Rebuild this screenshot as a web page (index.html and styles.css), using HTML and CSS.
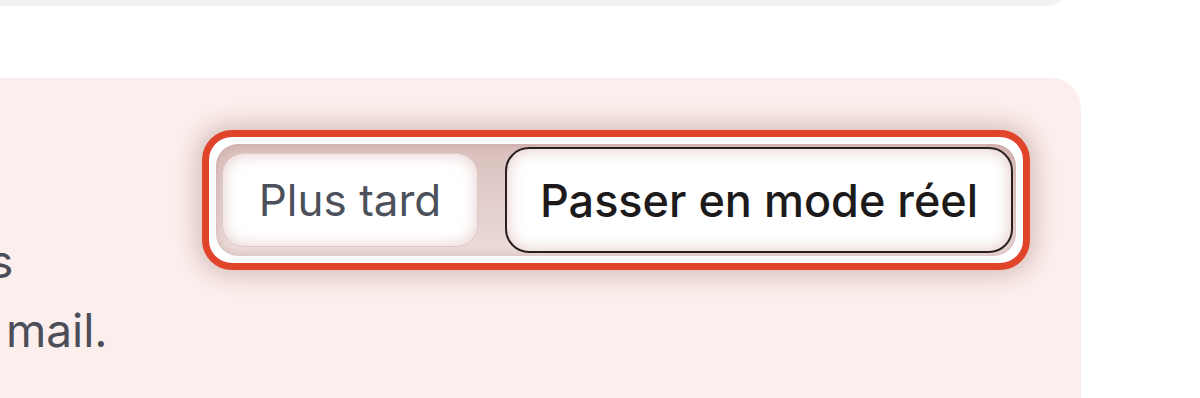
FILE: index.html
```html
<!DOCTYPE html>
<html lang="fr">
<head>
    <meta charset="UTF-8">
    <meta name="viewport" content="width=device-width, initial-scale=1.0">
    <title>Mode test</title>
    <link rel="stylesheet" href="styles.css">
</head>
<body>

<div class="top-card"></div>

<div class="test-banner">
    <div class="banner-text">
        <h2>Mode test</h2>
        <p class="line">Vous êtes actuellement en mode test. Les</p>
        <p class="line">ne sont pas encaissés et rien ne part par mail.</p>
    </div>
    <div class="highlight">
        <div class="actions">
            <button class="btn btn-later">Plus tard</button>
            <button class="btn btn-live">Passer en mode réel</button>
        </div>
    </div>
</div>

</body>
</html>
```

FILE: styles.css
```css
body {
    margin: 0;
    background-color: #fff;
    font-family: Inter, "Noto Sans", sans-serif;
    overflow: hidden;
}
.top-card {
    width: 1065px;
    height: 20px;
    margin-top: -14px;
    background-color: #f3f2f0;
    border-radius: 0 0 16px 0;
}
.test-banner {
    display: flex;
    align-items: flex-start;
    width: 2481px;
    margin-left: -1400px;
    margin-top: 72px;
    padding: 52px 51px 120px 0;
    box-sizing: border-box;
    background-color: #fbeeec;
    border-radius: 30px;
}
.banner-text {
    color: #4b4e58;
    font-size: 46px;
    line-height: 69px;
    white-space: nowrap;
    padding-left: 507px;
}
.banner-text h2 {
    margin: 0 0 28px;
    font-size: 46px;
    line-height: 69px;
    font-weight: 600;
    color: #231f20;
}
.line {
    margin: 0;
}
.highlight {
    flex-shrink: 0;
    margin-left: auto;
    border: 7px solid #e0452b;
    border-radius: 30px;
    padding: 7px;
    background-color: #fff;
    box-shadow: 0 0 22px 6px rgba(140, 85, 75, 0.3);
}
.actions {
    display: flex;
    align-items: center;
    gap: 27px;
    width: 800px;
    height: 112px;
    box-sizing: border-box;
    padding: 0 3px 0 6px;
    border-radius: 22px;
    background: linear-gradient(#d9bfbc, #ecdcda);
    box-shadow: inset 0 0 10px rgba(170, 110, 105, 0.35);
}
.btn {
    font-family: Inter, "Noto Sans", sans-serif;
    font-size: 44px;
    background-color: #fff;
    cursor: pointer;
    padding: 0;
}
.btn-later {
    width: 256px;
    height: 94px;
    color: #4c505a;
    border: 1px solid #dfc9c7;
    border-radius: 22px;
    box-shadow: inset 0 0 16px rgba(190, 130, 125, 0.4);
}
.btn-live {
    width: 508px;
    height: 106px;
    color: #1c1a1b;
    font-size: 45px;
    font-weight: 500;
    border: 2px solid #2b2020;
    border-radius: 24px;
    box-shadow: inset 0 0 16px rgba(190, 130, 125, 0.45);
}
```
